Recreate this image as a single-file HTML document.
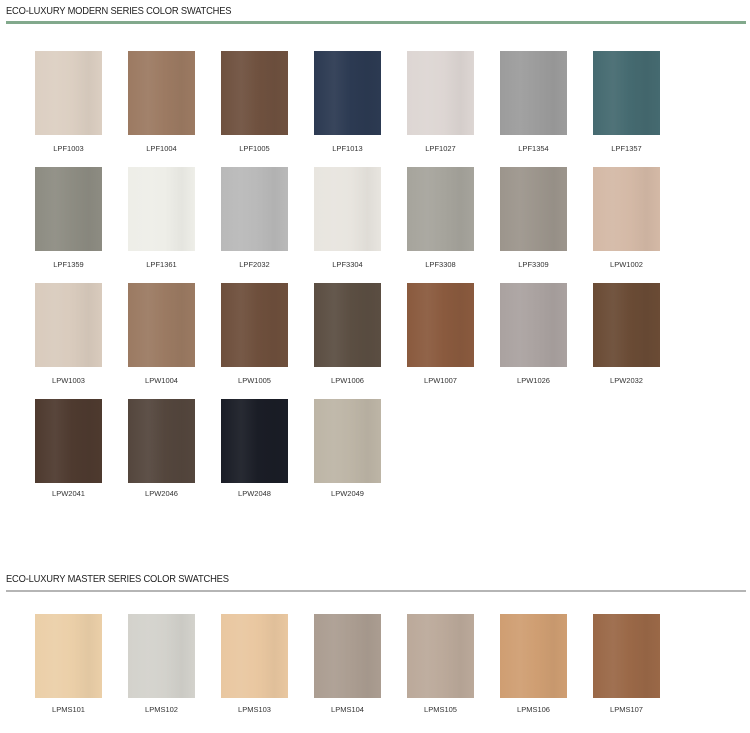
<!DOCTYPE html>
<html><head><style>
body{margin:0;width:750px;height:733px;background:#fff;position:relative;font-family:"Liberation Sans",sans-serif;overflow:hidden}
.h{position:absolute;left:6px;font-size:10.5px;color:#222;letter-spacing:-0.2px;transform:scaleX(0.89);transform-origin:left}
.line{position:absolute;left:6px;width:740px}
.s{position:absolute;width:67px;height:84px}
.l{position:absolute;width:67px;text-align:center;font-size:7.5px;color:#333}
</style></head><body>
<div class="h" style="top:5px">ECO-LUXURY MODERN SERIES COLOR SWATCHES</div>
<div class="line" style="top:21px;height:3px;background:#82a98c"></div>
<div class="h" style="top:573px">ECO-LUXURY MASTER SERIES COLOR SWATCHES</div>
<div class="line" style="top:590px;height:2px;background:#b5b5b5"></div>
<script>
const rows=[
[51,149,[["LPF1003","#dccfc2"],["LPF1004","#9c7a62"],["LPF1005","#6f513f"],["LPF1013","#2c3a52"],["LPF1027","#ddd6d3"],["LPF1354","#9c9c9c"],["LPF1357","#456a70"]]],
[167,265,[["LPF1359","#8d8c82"],["LPF1361","#eeeee8"],["LPF2032","#b9b9b9"],["LPF3304","#e8e5df"],["LPF3308","#a6a49c"],["LPF3309","#9c958c"],["LPW1002","#d4b9a6"]]],
[283,381,[["LPW1003","#d9cbbd"],["LPW1004","#9b7a62"],["LPW1005","#6e4f3c"],["LPW1006","#5b4e42"],["LPW1007","#8a5a3e"],["LPW1026","#aaa2a0"],["LPW2032","#6a4b35"]]],
[399,494,[["LPW2041","#4e3a2f"],["LPW2046","#54463d"],["LPW2048","#1a1d26"],["LPW2049","#bdb5a6"]]],
[614,710,[["LPMS101","#ebcfa8"],["LPMS102","#d3d2cc"],["LPMS103","#e9c7a0"],["LPMS104","#ab9d91"],["LPMS105","#bba99a"],["LPMS106","#cf9e72"],["LPMS107","#9a6847"]]]];
let h='';
rows.forEach(([y,ly,items])=>items.forEach(([n,c],i)=>{const x=35+i*93;
h+=`<div class="s" style="left:${x}px;top:${y}px;background:linear-gradient(90deg,${c},rgba(255,255,255,.06) 30%,${c} 55%,rgba(0,0,0,.04) 80%,${c});background-color:${c}"></div><div class="l" style="left:${x}px;top:${ly-5}px">${n}</div>`;}));
document.body.insertAdjacentHTML('beforeend',h);
</script>
</body></html>
